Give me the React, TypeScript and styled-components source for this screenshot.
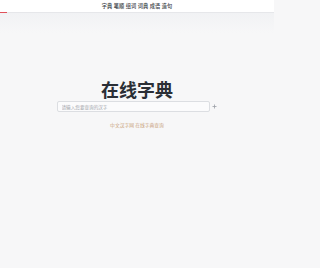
import styled, { createGlobalStyle } from "styled-components";

const GlobalStyle = createGlobalStyle`
    html, body {
        margin: 0;
        padding: 0;
        background: #f7f7f8;
    }
    body {
        width: 274px;
        font-family: "Noto Sans CJK SC", "Noto Sans", sans-serif;
    }
`;

const navItems = ["字典", "笔顺", "组词", "词典", "成语", "造句"];

function App() {
    return (
        <Page>
            <GlobalStyle />
            <Header>
                <Nav>
                    {navItems.map((item) => (
                        <NavLink key={item}>{item}</NavLink>
                    ))}
                </Nav>
                <Progress />
            </Header>
            <Main>
                <Title>在线字典</Title>
                <SearchRow>
                    <SearchInput placeholder="请输入您要查询的汉字" />
                    <AddButton aria-label="更多">
                        <svg width="5" height="5" viewBox="0 0 10 10">
                            <path d="M5 1v8M1 5h8" stroke="#9a9ea6" strokeWidth="1.6" />
                        </svg>
                    </AddButton>
                </SearchRow>
                <Footnote>中文汉字网 在线字典查询</Footnote>
            </Main>
        </Page>
    );
}

const Page = styled.div`
    width: 274px;
    min-height: 268px;
    display: flex;
    flex-direction: column;
`;

const Header = styled.header`
    background: #ffffff;
    border-bottom: 1px solid #e6e7ea;
    position: relative;
`;

const Nav = styled.nav`
    height: 12px;
    display: flex;
    justify-content: center;
    align-items: center;
    gap: 1.6px;
`;

const NavLink = styled.a`
    font-size: 5.2px;
    line-height: 1;
    color: #3a3e46;
    font-weight: 500;
    cursor: pointer;
`;

const Progress = styled.div`
    position: absolute;
    left: 0;
    bottom: -1px;
    width: 7px;
    height: 1px;
    background: #e0525a;
`;

const Main = styled.main`
    flex: 1;
    display: flex;
    flex-direction: column;
    align-items: center;
    padding-top: 64px;
    background: linear-gradient(#f1f2f4 0, #f7f7f8 20px);
`;

const Title = styled.h1`
    margin: 0;
    font-size: 18px;
    line-height: 24px;
    font-weight: 700;
    color: #2b2f36;
`;

const SearchRow = styled.div`
    display: flex;
    align-items: center;
    gap: 2px;
`;

const SearchInput = styled.input`
    box-sizing: border-box;
    width: 153px;
    height: 11px;
    border: 1px solid #dcdee2;
    border-radius: 2px;
    background: #fbfbfc;
    padding: 0 4px;
    font-size: 4.6px;
    font-family: "Noto Sans CJK SC", sans-serif;
    outline: none;

    &::placeholder {
        color: #9fa3aa;
    }
`;

const AddButton = styled.button`
    width: 6px;
    height: 6px;
    padding: 0;
    border: 0;
    background: none;
    display: flex;
    align-items: center;
    justify-content: center;
`;

const Footnote = styled.p`
    margin: 9px 0 0;
    font-size: 4.8px;
    color: #c9a27a;
`;

export default App;
